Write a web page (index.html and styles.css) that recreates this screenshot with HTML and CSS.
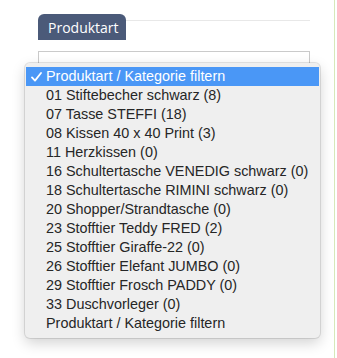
FILE: index.html
```html
<!DOCTYPE html>
<html lang="de">
<head>
    <meta charset="UTF-8">
    <meta name="viewport" content="width=device-width, initial-scale=1.0">
    <title>Produktart</title>
    <link rel="stylesheet" href="styles.css">
</head>
<body>
    <div class="page">
        <div class="head">
            <div class="tab">Produktart</div>
            <div class="rule"></div>
        </div>
        <div class="select"></div>

        <ul class="menu">
            <li class="opt sel">
                <svg class="check" width="11" height="10" viewBox="0 0 11 10">
                    <path d="M1 5.4 L4 8.6 L10 1" fill="none" stroke="#fff" stroke-width="1.8" stroke-linecap="round" stroke-linejoin="round"/>
                </svg>
                Produktart / Kategorie filtern
            </li>
            <li class="opt">01 Stiftebecher schwarz (8)</li>
            <li class="opt">07 Tasse STEFFI (18)</li>
            <li class="opt">08 Kissen 40 x 40 Print (3)</li>
            <li class="opt">11 Herzkissen (0)</li>
            <li class="opt">16 Schultertasche VENEDIG schwarz (0)</li>
            <li class="opt">18 Schultertasche RIMINI schwarz (0)</li>
            <li class="opt">20 Shopper/Strandtasche (0)</li>
            <li class="opt">23 Stofftier Teddy FRED (2)</li>
            <li class="opt">25 Stofftier Giraffe-22 (0)</li>
            <li class="opt">26 Stofftier Elefant JUMBO (0)</li>
            <li class="opt">29 Stofftier Frosch PADDY (0)</li>
            <li class="opt">33 Duschvorleger (0)</li>
            <li class="opt">Produktart / Kategorie filtern</li>
        </ul>
    </div>
</body>
</html>
```

FILE: styles.css
```css
body {
    margin: 0;
    background-color: #ffffff;
    font-family: "Liberation Sans", Arial, sans-serif;
}

.page {
    position: relative;
    width: 335px;
    height: 358px;
    box-sizing: border-box;
    padding: 14px 0 0 38px;
    border-right: 1px solid #d6e8b9;
}

.head {
    display: flex;
    align-items: center;
    width: 272px;
}

.tab {
    width: 88px;
    height: 26px;
    box-sizing: border-box;
    padding-left: 10px;
    background-color: #4b5a79;
    color: #ffffff;
    border-radius: 6px 6px 0 0;
    font-family: "Open Sans", sans-serif;
    font-size: 14px;
    line-height: 28px;
    white-space: nowrap;
}

.rule {
    flex: 1;
    height: 1px;
    margin-top: -13px;
    background-color: #e8e8e8;
}

.select {
    width: 272px;
    height: 30px;
    margin-top: 11px;
    box-sizing: border-box;
    border: 1px solid #cacaca;
}

/* dropdown open over the select */
.menu {
    position: absolute;
    left: 25px;
    top: 63px;
    width: 295px;
    height: 275px;
    box-sizing: border-box;
    margin: 0;
    padding: 4px 1px 5px;
    list-style: none;
    background-color: #efefef;
    border-radius: 5px;
    box-shadow: 0 0 0 1px rgba(0, 0, 0, 0.1), 0 5px 14px rgba(0, 0, 0, 0.18);
}

.opt {
    position: relative;
    height: 19px;
    padding-left: 20px;
    color: #262626;
    font-size: 14.4px;
    line-height: 19px;
    white-space: nowrap;
}

.opt.sel {
    background-color: #4a97f6;
    color: #ffffff;
}

.check {
    position: absolute;
    left: 5px;
    top: 5px;
}
```
